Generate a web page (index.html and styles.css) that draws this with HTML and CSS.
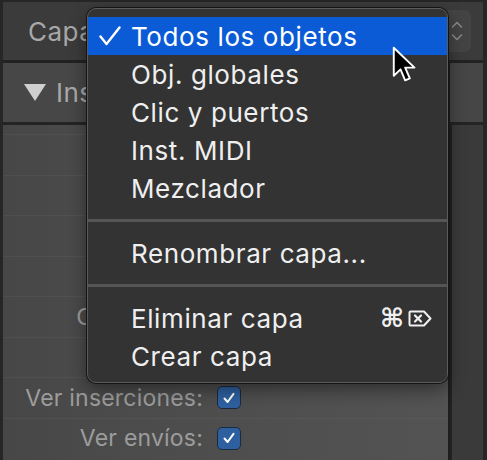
FILE: index.html
```html
<!DOCTYPE html>
<html lang="es">
<head>
<meta charset="utf-8">
<title>Capa</title>
<link rel="stylesheet" href="styles.css">
</head>
<body>
<div class="window">
  <div class="topbar">
    <span class="top-label">Capa</span>
    <div class="popup">
      <svg class="chev" width="12" height="24" viewBox="0 0 12 24"><path d="M1.5 8 L6 3.5 L10.5 8 M1.5 16 L6 20.5 L10.5 16" fill="none" stroke="#8a8a8a" stroke-width="1.6" stroke-linecap="round" stroke-linejoin="round"/></svg>
    </div>
  </div>
  <div class="main">
    <div class="inspector">
      <div class="section-header">
        <span class="tri"></span>
        <span class="section-title">Instrumento</span>
      </div>
      <div class="rows">
        <div class="row"></div>
        <div class="row"></div>
        <div class="row"></div>
        <div class="row"></div>
        <div class="row"><span class="clip"><span class="lbl">Canal MIDI:</span></span></div>
        <div class="row"></div>
        <div class="row"><span class="lbl">Ver inserciones:</span><span class="cb"><svg width="14" height="14" viewBox="0 0 14 14"><path d="M2.5 7.5 L5.6 11 L11.5 2.8" fill="none" stroke="#fff" stroke-width="2" stroke-linecap="round" stroke-linejoin="round"/></svg></span></div>
        <div class="row"><span class="lbl">Ver envíos:</span><span class="cb"><svg width="14" height="14" viewBox="0 0 14 14"><path d="M2.5 7.5 L5.6 11 L11.5 2.8" fill="none" stroke="#fff" stroke-width="2" stroke-linecap="round" stroke-linejoin="round"/></svg></span></div>
      </div>
    </div>
    <div class="side">
      <div class="side-head"></div>
      <div class="side-body"></div>
    </div>
  </div>

  <div class="menu">
    <div class="item active">
      <svg class="check" width="22" height="20" viewBox="0 0 22 20"><path d="M1.5 10.5 L7.5 18 L20.5 1.5" fill="none" stroke="#fff" stroke-width="2.4" stroke-linecap="round" stroke-linejoin="round"/></svg>
      <span>Todos los objetos</span>
    </div>
    <div class="item"><span>Obj. globales</span></div>
    <div class="item"><span>Clic y puertos</span></div>
    <div class="item"><span>Inst. MIDI</span></div>
    <div class="item"><span>Mezclador</span></div>
    <div class="sep"></div>
    <div class="item"><span>Renombrar capa...</span></div>
    <div class="sep"></div>
    <div class="item">
      <span>Eliminar capa</span>
      <span class="shortcut">
        <span class="cmd">⌘</span>
        <svg width="24" height="17" viewBox="0 0 24 17"><path d="M2.5 1.5 H16 L22.5 8.5 L16 15.5 H2.5 Q1.5 15.5 1.5 14.5 V2.5 Q1.5 1.5 2.5 1.5 Z" fill="none" stroke="#f0f0f0" stroke-width="2" stroke-linejoin="round"/><path d="M7 5.5 L13 11.5 M13 5.5 L7 11.5" stroke="#f0f0f0" stroke-width="2.2" stroke-linecap="round"/></svg>
      </span>
    </div>
    <div class="item"><span>Crear capa</span></div>
  </div>

  <svg class="cursor" width="26" height="38" viewBox="0 0 15 22"><path d="M1 1 L1 17.2 L4.9 13.5 L7.6 19.9 L10.3 18.8 L7.6 12.5 L13 12.5 Z" fill="#000" stroke="#fff" stroke-width="1.1" stroke-linejoin="round"/></svg>
</div>
</body>
</html>
```

FILE: styles.css
```css
html, body {
  margin: 0;
  padding: 0;
  background: #282828;
}

.window {
  position: relative;
  width: 487px;
  height: 460px;
  overflow: hidden;
  box-sizing: border-box;
  padding: 2px 4px 0 3px;
  display: flex;
  flex-direction: column;
  font-family: "Inter", "Liberation Sans", sans-serif;
  background: #262626;
}

.topbar {
  height: 58px;
  flex: none;
  background: #3b3b3b;
  border-bottom: 3px solid #222;
  display: flex;
  align-items: center;
  padding-left: 25px;
  padding-right: 12px;
}

.top-label {
  font-size: 26px;
  letter-spacing: 0.5px;
  color: #a8a8a8;
}

.popup {
  margin-left: auto;
  width: 375px;
  height: 42px;
  border-radius: 7px;
  background: #444;
  display: flex;
  align-items: center;
  justify-content: flex-end;
  padding-right: 8px;
  box-sizing: border-box;
}

.main {
  flex: 1;
  display: flex;
  min-height: 0;
}

.inspector {
  width: 445px;
  display: flex;
  flex-direction: column;
}

.section-header {
  height: 59px;
  flex: none;
  background: #474747;
  border-bottom: 3px solid #242424;
  display: flex;
  align-items: center;
  padding-left: 21px;
  gap: 10px;
}

.tri {
  width: 0;
  height: 0;
  border-left: 11px solid transparent;
  border-right: 11px solid transparent;
  border-top: 17px solid #cfcfcf;
}

.section-title {
  width: 32px;
  overflow: hidden;
  white-space: nowrap;
  font-size: 26px;
  letter-spacing: 0.5px;
  color: #a9a9a9;
}

.rows {
  flex: 1;
  padding-top: 9px;
  background: linear-gradient(90deg, #474747 0%, #4d4d4d 40%, #535353 100%);
}

.row {
  height: 40.5px;
  box-sizing: border-box;
  border-top: 1px solid rgba(255, 255, 255, 0.04);
  display: flex;
  align-items: center;
}

.clip {
  width: 84px;
  overflow: hidden;
  display: flex;
  justify-content: flex-end;
  direction: rtl;
}

.clip .lbl {
  flex: none;
  direction: ltr;
}

.lbl {
  width: 200px;
  text-align: right;
  font-size: 23px;
  letter-spacing: 0.2px;
  color: #9c9c9c;
  white-space: nowrap;
}

.cb {
  margin-left: 14px;
  width: 24px;
  height: 23px;
  box-sizing: border-box;
  border-radius: 5px;
  background: #2e609f;
  border: 1px solid #1b2a3e;
  display: flex;
  align-items: center;
  justify-content: center;
}

.side {
  flex: 1;
  display: flex;
  flex-direction: column;
  border-left: 2px solid #1e1e1e;
}

.side-head {
  height: 59px;
  flex: none;
  background: #464646;
  border-bottom: 3px solid #242424;
}

.side-body {
  flex: 1;
  background: #3a3a3a;
  border-left: 2px solid #222;
}

/* menu */
.menu {
  position: absolute;
  left: 87px;
  top: 8px;
  width: 361px;
  height: 375px;
  box-sizing: border-box;
  padding: 8px 0;
  background: #333;
  border: 1px solid #5b5b5b;
  border-radius: 9px;
  box-shadow: 0 0 0 1px #141414, 0 6px 18px rgba(0, 0, 0, 0.45);
  color: #efefef;
  font-size: 26px;
  letter-spacing: 0.6px;
}

.item {
  position: relative;
  height: 38px;
  display: flex;
  align-items: center;
  padding-left: 43px;
  padding-right: 15px;
  white-space: nowrap;
}

.item.active {
  background: #0b5bd6;
  color: #fff;
}

.check {
  position: absolute;
  left: 11px;
  top: 9px;
}

.sep {
  height: 3px;
  margin: 12px 0 12px;
  background: #555;
}

.shortcut {
  margin-left: auto;
  display: flex;
  align-items: center;
  gap: 4px;
}

.cmd {
  font-family: "DejaVu Sans", sans-serif;
  font-size: 26px;
  font-weight: bold;
  letter-spacing: 0;
  color: #f0f0f0;
}

.cursor {
  position: absolute;
  left: 392px;
  top: 46px;
}
```
